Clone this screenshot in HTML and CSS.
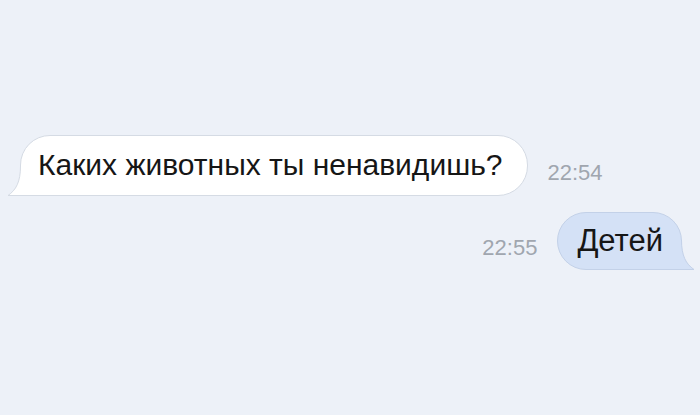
FILE: index.html
```html
<!DOCTYPE html>
<html lang="ru">
<head>
    <meta charset="UTF-8">
    <meta name="viewport" content="width=device-width, initial-scale=1.0">
    <title>Диалог</title>
    <link rel="stylesheet" href="styles.css">
</head>
<body>

    <div class="chat">
        <div class="row in">
            <div class="bubble">
                <svg class="tail" width="44" height="30" viewBox="0 0 44 30">
                    <path d="M13.5 0 C13.5 16 9 24 1 29.5 L44 29.5 L44 0 Z" fill="#fff"/>
                    <path d="M13.5 0 C13.5 16 9 24 1 29.5 L44 29.5" fill="none" stroke="#d5dbe4" stroke-width="1"/>
                </svg>
                <span class="text">Каких животных ты ненавидишь?</span>
            </div>
            <span class="time">22:54</span>
        </div>

        <div class="row out">
            <span class="time">22:55</span>
            <div class="bubble">
                <svg class="tail" width="44" height="30" viewBox="0 0 44 30">
                    <path d="M30.5 0 C30.5 16 35 24 43 29.5 L0 29.5 L0 0 Z" fill="#d4e1f6"/>
                    <path d="M30.5 0 C30.5 16 35 24 43 29.5 L0 29.5" fill="none" stroke="#c3d1e8" stroke-width="1"/>
                </svg>
                <span class="text">Детей</span>
            </div>
        </div>
    </div>

</body>
</html>
```

FILE: styles.css
```css
body { margin: 0; background: #edf1f8; font-family: "Liberation Sans", Arial, sans-serif; }
.chat { width: 700px; height: 415px; padding-top: 135px; box-sizing: border-box; display: flex; flex-direction: column; gap: 16px; }
.row { display: flex; align-items: center; gap: 20px; }
.row.in { padding-left: 20px; }
.row.out { justify-content: flex-end; padding-right: 18px; }
.bubble { position: relative; padding: 12px 24px 13px 17px; border-radius: 30px; font-size: 30px; line-height: 34px; color: #161616; }
.in .bubble { background: #fff; border: 1px solid #d5dbe4; }
.out .bubble { background: #d4e1f6; border: 1px solid #c3d1e8; padding: 11px 18px 11px 19px; font-size: 31px; }
.text { position: relative; }
.tail { position: absolute; bottom: -1px; }
.in .tail { left: -14px; }
.out .tail { right: -14px; }
.time { font-size: 22px; color: #a0a6af; padding-top: 14px; }
```
